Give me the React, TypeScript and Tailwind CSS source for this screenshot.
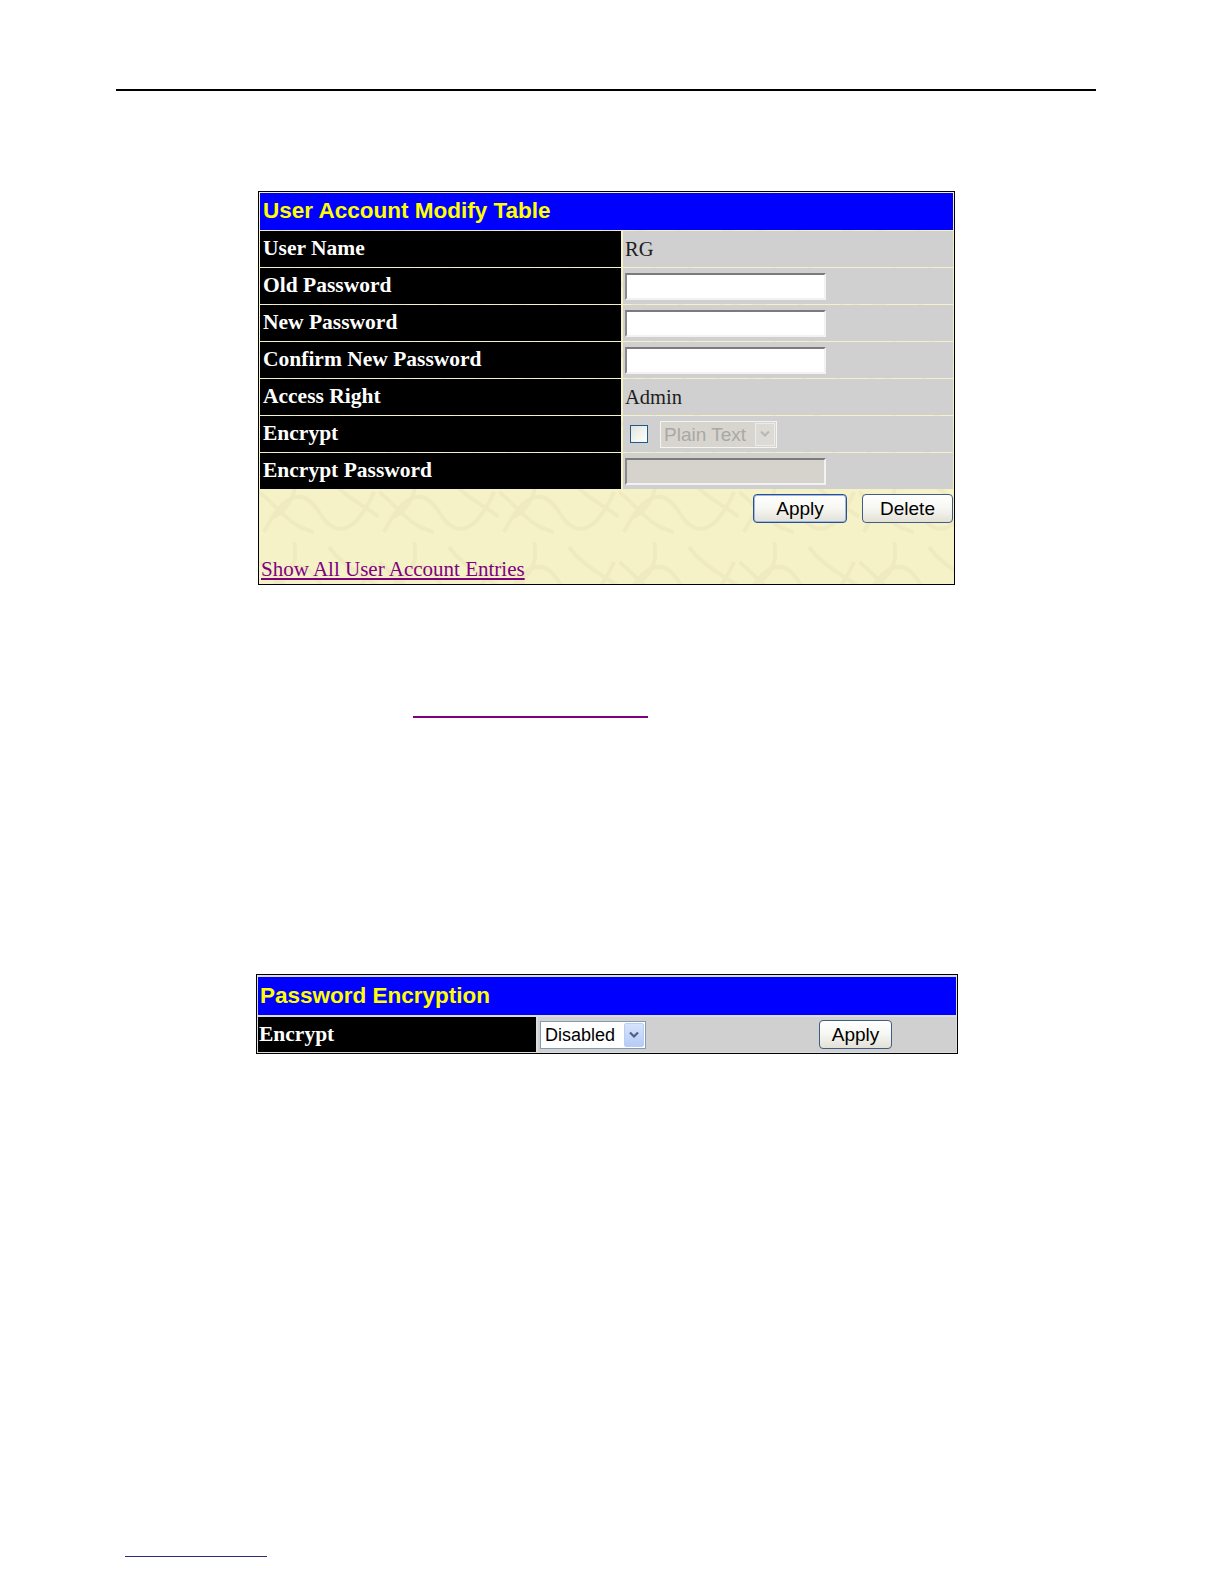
import React from "react";

const serif = "font-['Liberation_Serif','Times_New_Roman',serif]";
const sans = "font-['Liberation_Sans',Arial,sans-serif]";

type RowProps = {
  label: string;
  children?: React.ReactNode;
};

function Row({ label, children }: RowProps) {
  return (
    <div className="relative flex h-[36px] mt-px">
      <div
        className={`w-[361px] bg-black text-white font-bold text-[21.5px] leading-none pl-[3px] flex items-center ${serif}`}
      >
        {label}
      </div>
      <div className="flex-1 ml-[2px] bg-[#d0d0d0] flex items-center">
        {children}
      </div>
    </div>
  );
}

function TextBox({ disabled }: { disabled?: boolean }) {
  return (
    <div
      className={`ml-[2px] w-[201px] h-[27px] border-2 border-t-[#7b7b7b] border-l-[#8a8a8a] border-b-[#f2f2f2] border-r-[#f2f2f2] ${
        disabled ? "bg-[#d6d3cc]" : "bg-white"
      }`}
    />
  );
}

function ValueText({ children }: { children: React.ReactNode }) {
  return (
    <span className={`pl-[2px] text-[20.5px] leading-none text-[#1e1e1e] ${serif}`}>
      {children}
    </span>
  );
}

function XpButton({
  children,
  width,
  primary,
}: {
  children: React.ReactNode;
  width: string;
  primary?: boolean;
}) {
  return (
    <button
      type="button"
      className={`${width} h-[29px] rounded-[4px] border ${
        primary ? "border-[#2a4f8f] shadow-[inset_0_0_0_1px_#9cb8ea]" : "border-[#3f5d86]"
      } bg-gradient-to-b from-white via-[#f6f6f2] to-[#e3e1d6] text-[19px] leading-none text-black ${sans}`}
    >
      {children}
    </button>
  );
}

function Chevron({ color }: { color: string }) {
  return (
    <svg width="12" height="8" viewBox="0 0 12 8">
      <path d="M2 1.5 L6 5.5 L10 1.5" fill="none" stroke={color} strokeWidth="2.2" />
    </svg>
  );
}

// faint swirl texture of the beige table background
function Texture() {
  return (
    <svg className="absolute inset-0 w-full h-full" preserveAspectRatio="none">
      <defs>
        <pattern id="swirl" width="120" height="70" patternUnits="userSpaceOnUse">
          <path
            d="M5 60 C25 20 45 15 60 40 S95 65 115 20 M0 20 C20 35 30 55 55 60 M70 5 C85 25 100 30 120 45 M35 0 C40 20 30 35 15 45"
            fill="none"
            stroke="#efeabf"
            strokeWidth="4"
          />
        </pattern>
      </defs>
      <rect width="100%" height="100%" fill="url(#swirl)" />
    </svg>
  );
}

export default function App() {
  return (
    <div className="w-full h-screen bg-white overflow-hidden pt-[89px]">
      <div className="ml-[116px] w-[980px] h-[2px] bg-black" />

      {/* User Account Modify Table */}
      <div className="relative ml-[258px] mt-[100px] w-[697px] border border-black bg-[#f6f2c8] p-px">
        <Texture />
        <div
          className={`relative h-[37px] bg-[#0000ff] flex items-center pl-[3px] text-[#ffff00] font-bold text-[22.5px] leading-none ${sans}`}
        >
          User Account Modify Table
        </div>
        <Row label="User Name">
          <ValueText>RG</ValueText>
        </Row>
        <Row label="Old Password">
          <TextBox />
        </Row>
        <Row label="New Password">
          <TextBox />
        </Row>
        <Row label="Confirm New Password">
          <TextBox />
        </Row>
        <Row label="Access Right">
          <ValueText>Admin</ValueText>
        </Row>
        <Row label="Encrypt">
          <div className="ml-[7px] w-[18px] h-[18px] border border-[#1f5a8c] bg-gradient-to-br from-[#e4e4de] to-white" />
          <div className="ml-[12px] w-[117px] h-[27px] border border-[#f4f4f4] bg-[#d8d5ce] flex">
            <span
              className={`flex-1 flex items-center pl-[3px] text-[19px] leading-none text-[#a8a8a8] ${sans}`}
            >
              Plain Text
            </span>
            <span className="w-[20px] m-px bg-[#dcdad4] border border-[#ececec] flex items-center justify-center">
              <Chevron color="#b8b8b8" />
            </span>
          </div>
        </Row>
        <Row label="Encrypt Password">
          <TextBox disabled />
        </Row>
        <div className="relative h-[94px] flex flex-col">
          <div className="flex justify-end gap-[15px] pt-[5px]">
            <XpButton width="w-[94px]" primary>
              Apply
            </XpButton>
            <XpButton width="w-[91px]">Delete</XpButton>
          </div>
          <a
            href="#"
            className={`mt-auto mb-[3px] pl-px w-max text-[21px] leading-[22px] text-[#800080] underline ${serif}`}
          >
            Show All User Account Entries
          </a>
        </div>
      </div>

      <div className="ml-[413px] mt-[131px] w-[235px] h-[2px] bg-[#800080]" />

      {/* Password Encryption */}
      <div className="ml-[256px] mt-[256px] w-[702px] border border-black bg-[#dcdcdc] pt-[2px] pb-px px-px">
        <div
          className={`h-[38px] bg-[#0000ff] flex items-center pl-[2px] text-[#ffff00] font-bold text-[22.5px] leading-none ${sans}`}
        >
          Password Encryption
        </div>
        <div className="flex h-[35px] mt-[2px]">
          <div
            className={`w-[278px] bg-black text-white font-bold text-[21.5px] leading-none pl-px flex items-center ${serif}`}
          >
            Encrypt
          </div>
          <div className="flex-1 ml-[2px] bg-[#d0d0d0] flex items-center">
            <div className="ml-[2px] w-[106px] h-[28px] border border-[#7f9db9] bg-white flex">
              <span
                className={`flex-1 flex items-center pl-[4px] text-[18px] leading-none text-black ${sans}`}
              >
                Disabled
              </span>
              <span className="w-[20px] m-px rounded-[2px] bg-gradient-to-b from-[#d6e3fb] to-[#b6cbf6] border border-[#b9cdf5] flex items-center justify-center">
                <Chevron color="#4d6185" />
              </span>
            </div>
            <div className="ml-[173px]">
              <XpButton width="w-[73px]">Apply</XpButton>
            </div>
          </div>
        </div>
      </div>

      <div className="ml-[125px] mt-[502px] w-[142px] h-px bg-[#2b2b7a]" />
    </div>
  );
}
